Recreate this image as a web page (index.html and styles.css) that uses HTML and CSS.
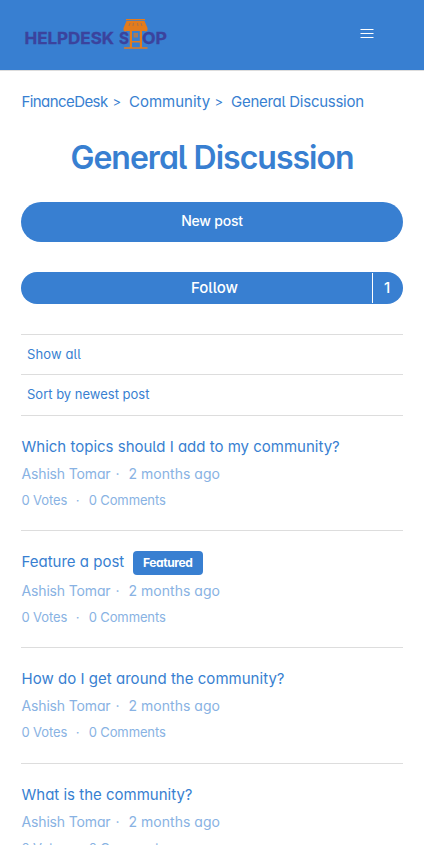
FILE: index.html
```html
<!DOCTYPE html>
<html lang="en">
<head>
<meta charset="utf-8">
<title>General Discussion</title>
<link rel="stylesheet" href="styles.css">
</head>
<body>
<header class="header">
  <a class="logo" aria-label="Helpdesk Shop">
    <svg width="146" height="36" viewBox="0 0 146 36">
      <g class="logo-text">
        <text x="2.500" y="27" textLength="89.500" lengthAdjust="spacingAndGlyphs">HELPDESK</text>
        <text x="97" y="27" textLength="10" lengthAdjust="spacingAndGlyphs">S</text>
        <text x="120" y="27" textLength="25" lengthAdjust="spacingAndGlyphs">OP</text>
      </g>
      <g fill="#e37b1c">
        <path d="M104 2h19v1.200h-19zM104.500 4h18l3 7v2.500q-1.500 1.500-3 .5h-18q-1.500 1-3-.5v-2.500z"/>
        <path d="M107.800 13h2.200v18h-2.200zM117.800 13h2.200v18h-2.200zM110 24h8v1.500h-8zM102 30.300h23.500v1.500h-23.500z"/>
        <path d="M111.500 16h4.500v4.500h-4.500z" opacity=".65"/>
      </g>
      <path d="M108 6l-1 3M111.500 6l-.5 3M115.500 6l.5 3M119 6l1 3" stroke="#a1744f"/>
    </svg>
  </a>
  <button class="menu" aria-label="Menu">
    <svg width="14" height="10" viewBox="0 0 14 10"><path d="M.5 .5h13M.5 4.500h13M.5 8.500h13" stroke="#fff"/></svg>
  </button>
</header>
<main class="page">
  <nav class="crumbs"><a class="c1">FinanceDesk</a><i>&gt;</i><a class="c2">Community</a><i>&gt;</i><a class="c3">General Discussion</a></nav>
  <h1 class="title"><span>General Discussion</span></h1>
  <a class="new-post">New post</a>
  <div class="follow"><span class="follow-label">Follow</span><span class="follow-count">1</span></div>
  <div class="filters">
    <div class="filter show">Show all</div>
    <div class="filter sort">Sort by newest post</div>
  </div>
  <ul class="posts">
    <li class="post">
      <div class="post-title"><a>Which topics should I add to my community?</a></div>
      <div class="meta"><span>Ashish Tomar</span><b>·</b><span>2 months ago</span></div>
      <div class="counts"><span>0 Votes</span><b>·</b><span>0 Comments</span></div>
    </li>
    <li class="post featured">
      <div class="post-title"><a>Feature a post</a><span class="badge">Featured</span></div>
      <div class="meta"><span>Ashish Tomar</span><b>·</b><span>2 months ago</span></div>
      <div class="counts"><span>0 Votes</span><b>·</b><span>0 Comments</span></div>
    </li>
    <li class="post">
      <div class="post-title"><a>How do I get around the community?</a></div>
      <div class="meta"><span>Ashish Tomar</span><b>·</b><span>2 months ago</span></div>
      <div class="counts"><span>0 Votes</span><b>·</b><span>0 Comments</span></div>
    </li>
    <li class="post">
      <div class="post-title"><a>What is the community?</a></div>
      <div class="meta"><span>Ashish Tomar</span><b>·</b><span>2 months ago</span></div>
      <div class="counts"><span>0 Votes</span><b>·</b><span>0 Comments</span></div>
    </li>
  </ul>
</main>
</body>
</html>
```
FILE: styles.css
```css
* { box-sizing: border-box; }
html { overflow: hidden; }
body {
  margin: 0;
  height: 845px;
  overflow: hidden;
  background: #fff;
  color: #387fd1;
  font: 15px/20px Inter, "Noto Sans", sans-serif;
  font-feature-settings: "cv11", "cv05";
}
.header {
  height: 71px;
  padding: 0 50px 0 22px;
  display: flex;
  align-items: center;
  justify-content: space-between;
  background: #387fd1;
  border-bottom: 1px solid #ddd;
}
.logo, .logo svg, .menu svg { display: block; }
.logo-text { font: 700 16px Inter, sans-serif; fill: #3b439d; stroke: #3b439d; stroke-width: .3px; }
.menu { padding: 0; border: 0; background: none; margin-top: -2px; }
.page { padding: 21px 21px 0; }
.crumbs { display: flex; height: 20px; padding-left: .5px; }
.crumbs i { font-style: normal; width: 21.500px; padding-left: 5px; font-size: 13px; }
.c1 { width: 86px; letter-spacing: -.58px; }
.c2 { width: 80.500px; }
.c3 { letter-spacing: -.27px; }
.title {
  margin: 23px 0 0;
  height: 45px;
  text-align: center;
  font-size: 32px;
  line-height: 45px;
  font-weight: 600;
  letter-spacing: -.98px;
}
.new-post, .follow {
  display: flex;
  align-items: center;
  justify-content: center;
  color: #fff;
  background: #387fd1;
}
.new-post {
  margin-top: 22px;
  height: 40px;
  border-radius: 20px;
  padding-bottom: 2px;
  font-size: 14px;
  font-weight: 500;
  letter-spacing: -.2px;
}
.follow {
  margin-top: 30px;
  height: 32px;
  padding: 1px 0;
  border-radius: 16px;
  font-weight: 500;
}
.follow-label { flex: 1; padding-left: 36px; text-align: center; }
.follow-count {
  width: 31px;
  height: 30px;
  line-height: 30px;
  padding-right: 2px;
  border-left: 1px solid #fff;
  text-align: center;
}
.filters { margin-top: 30px; font-size: 13px; }
.filter { height: 40px; padding: 9px 6px; border-top: 1px solid #ddd; line-height: 20px; }
.show { letter-spacing: .12px; }
.sort { height: 41px; }
.posts { margin: 0; padding: 0; list-style: none; }
.post { height: 115px; padding: 21px 0 0 .5px; border-top: 1px solid #ddd; }
.featured { height: 117px; padding-top: 20px; }
.post:nth-child(3) { height: 116px; }
.post:nth-child(3) .post-title { letter-spacing: .03px; }
.post-title { display: flex; height: 20px; line-height: 20px; }
.badge {
  height: 24px;
  width: 70px;
  margin-left: 8.500px;
  border-radius: 4px;
  background: #387fd1;
  color: #fff;
  font-size: 12px;
  line-height: 24px;
  font-weight: 700;
  letter-spacing: -.4px;
  text-align: center;
}
.featured .post-title { height: 24px; line-height: 22px; }
.featured .badge { line-height: 24px; }
.meta, .counts { display: flex; height: 20px; color: #88b2e3; }
.meta { margin-top: 7px; font-size: 14px; letter-spacing: -.15px; }
.meta span:last-child { letter-spacing: .03px; }
.featured .meta { margin-top: 6px; }
.meta b { width: 18px; padding-left: 5px; font-weight: 400; }
.counts { margin-top: 6px; font-size: 13px; letter-spacing: -.12px; }
.counts b { width: 21.500px; padding-left: 8.500px; font-weight: 400; }
```
